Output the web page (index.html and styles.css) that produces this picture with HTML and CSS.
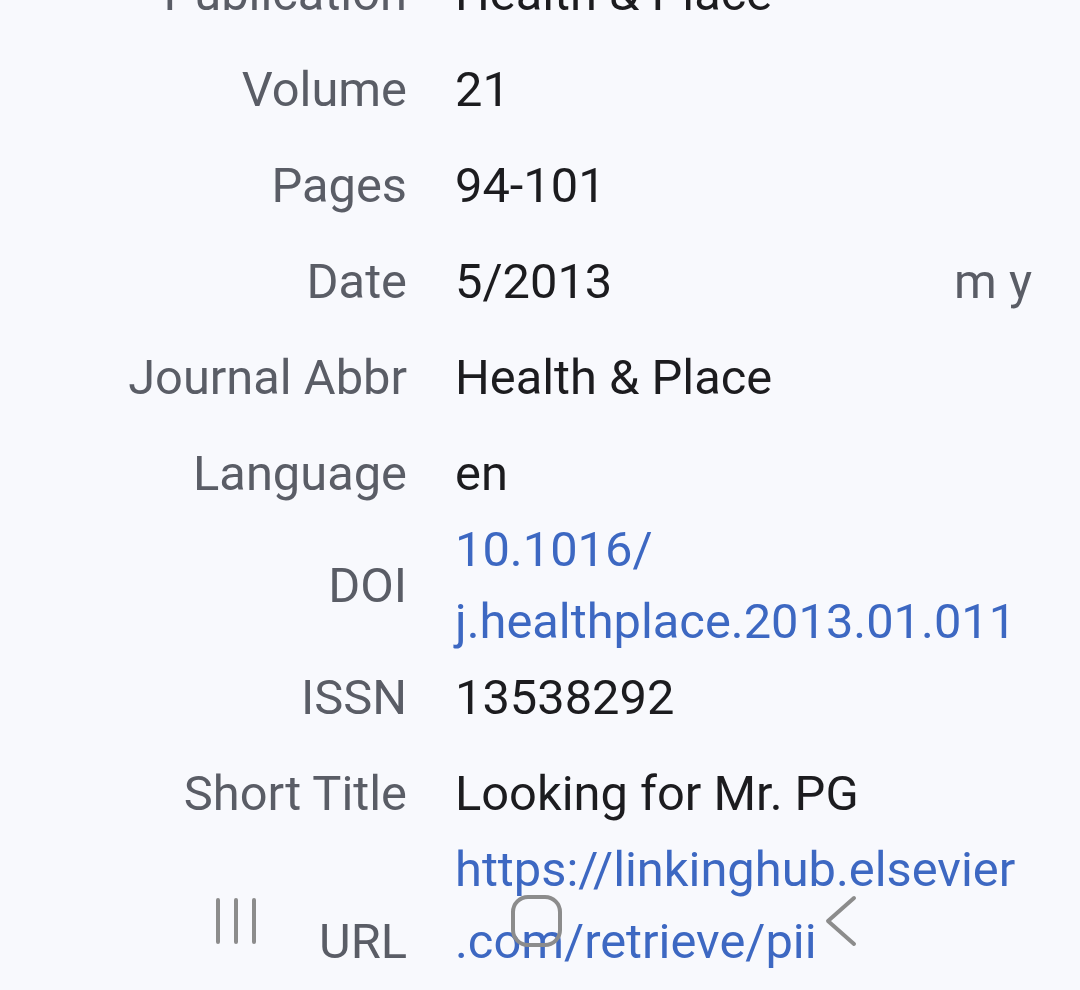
FILE: index.html
```html
<!DOCTYPE html>
<html>
<head>
<meta charset="utf-8">
<link rel="stylesheet" href="styles.css">
</head>
<body>
<div class="screen">
  <div class="fields">
    <div class="row"><div class="label">Publication</div><div class="value">Health &amp; Place</div></div>
    <div class="row"><div class="label">Volume</div><div class="value">21</div></div>
    <div class="row"><div class="label">Pages</div><div class="value">94-101</div></div>
    <div class="row"><div class="label">Date</div><div class="value date"><span>5/2013</span><span class="hint">m y</span></div></div>
    <div class="row"><div class="label">Journal Abbr</div><div class="value">Health &amp; Place</div></div>
    <div class="row"><div class="label">Language</div><div class="value">en</div></div>
    <div class="row multi"><div class="label">DOI</div><div class="value link">10.1016/<br>j.healthplace.2013.01.011</div></div>
    <div class="row"><div class="label">ISSN</div><div class="value">13538292</div></div>
    <div class="row"><div class="label">Short Title</div><div class="value">Looking for Mr. PG</div></div>
    <div class="row multi"><div class="label">URL</div><div class="value link">https://linkinghub.elsevier<br>.com/retrieve/pii<br>/S1353829213000154</div></div>
  </div>
  <div class="navbar">
    <svg class="nav-recent" width="50" height="48" viewBox="0 0 50 48"><path d="M7 3v42M25 3v42M43 3v42" stroke="#8c8c8c" stroke-width="4" stroke-linecap="round" fill="none"/></svg>
    <svg class="nav-home" width="54" height="54" viewBox="0 0 54 54"><rect x="3" y="3" width="47" height="48" rx="15" stroke="#8c8c8c" stroke-width="4" fill="none"/></svg>
    <svg class="nav-back" width="36" height="52" viewBox="0 0 36 52"><path d="M31 3L5 26l26 23" stroke="#8c8c8c" stroke-width="4" stroke-linecap="round" stroke-linejoin="round" fill="none"/></svg>
  </div>
</div>
</body>
</html>
```

FILE: styles.css
```css
html, body {
  margin: 0;
  padding: 0;
  background: #f8f9fd;
}
body {
  font-family: Roboto, "Noto Sans", sans-serif;
  width: 1080px;
  height: 990px;
  overflow: hidden;
}
.screen {
  position: relative;
  width: 1080px;
  height: 990px;
  overflow: hidden;
}
.fields {
  margin-top: -54px;
}
.row {
  display: grid;
  grid-template-columns: 407px 1fr;
  column-gap: 48px;
  align-items: center;
  min-height: 96px;
  padding-right: 48px;
  box-sizing: border-box;
}
.label {
  text-align: right;
  color: #5a5d66;
  font-size: 48.8px;
  line-height: 72px;
  white-space: nowrap;
}
.value {
  color: #1c1c1f;
  font-size: 48.8px;
  line-height: 72px;
  white-space: nowrap;
}
.multi .value {
  margin: -8px 0;
}
.link {
  color: #3d68c2;
}
.date {
  display: flex;
  justify-content: space-between;
}
.hint {
  color: #5a5d66;
}
.navbar {
  position: absolute;
  left: 0;
  right: 0;
  top: 894px;
  height: 56px;
}
.nav-recent {
  position: absolute;
  left: 211px;
  top: 3px;
}
.nav-home {
  position: absolute;
  left: 510px;
  top: 0;
}
.nav-back {
  position: absolute;
  left: 823px;
  top: 1px;
}
```
